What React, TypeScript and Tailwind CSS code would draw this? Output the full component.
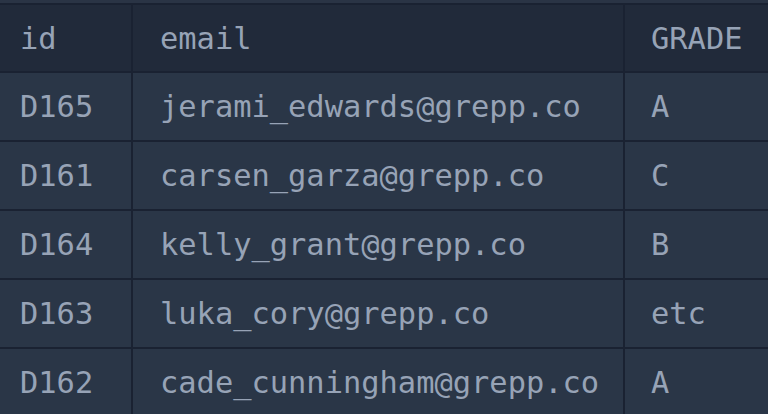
import React from "react";

const rows = [
  ["D165", "jerami_edwards@grepp.co", "A"],
  ["D161", "carsen_garza@grepp.co", "C"],
  ["D164", "kelly_grant@grepp.co", "B"],
  ["D163", "luka_cory@grepp.co", "etc"],
  ["D162", "cade_cunningham@grepp.co", "A"],
];

export default function App() {
  return (
    <div
      className="w-[768px] h-[414px] overflow-hidden bg-[#2a3445] text-[#97a3b6] text-[30.4px] leading-none"
      style={{ fontFamily: '"DejaVu Sans Mono", monospace' }}
    >
      <div className="h-[3px] bg-[#2a3445]" />
      <div className="grid grid-cols-[131px_490px_160px] gap-[2px] bg-[#1a2232] pt-[2px] w-[787px]">
        <div className="h-[66px] flex items-center pt-[2px] pl-[20px] bg-[#212a3a]">id</div>
        <div className="h-[66px] flex items-center pt-[2px] pl-[27px] bg-[#212a3a]">email</div>
        <div className="h-[66px] flex items-center pt-[2px] pl-[26px] bg-[#212a3a]">GRADE</div>
        {rows.map((r) => (
          <React.Fragment key={r[0]}>
            <div className="h-[67px] flex items-center pt-[2px] pl-[20px] bg-[#2a3647]">{r[0]}</div>
            <div className="h-[67px] flex items-center pt-[2px] pl-[27px] bg-[#2a3647]">{r[1]}</div>
            <div className="h-[67px] flex items-center pt-[2px] pl-[26px] bg-[#2a3647]">{r[2]}</div>
          </React.Fragment>
        ))}
      </div>
    </div>
  );
}
